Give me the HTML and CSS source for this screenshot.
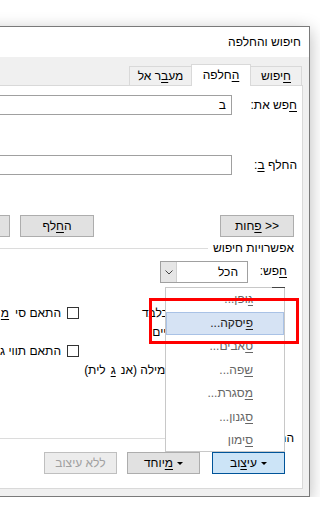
FILE: index.html
```html
<!DOCTYPE html>
<html lang="he">
<head>
  <meta charset="UTF-8">
  <title>חיפוש והחלפה</title>
  <link rel="stylesheet" href="styles.css">
</head>
<body>
  <div class="dialog">
    <div class="titlebar">חיפוש והחלפה</div>
    <div class="frame">
      <div class="tabs">
        <div class="tab" style="width:52px"><u>ח</u>יפוש</div>
        <div class="tab selected" style="width:60px"><u>ה</u>חלפה</div>
        <div class="tab" style="width:63px">מע<u>ב</u>ר אל</div>
      </div>
      <div class="panel">
        <div class="field find">
          <div class="label"><u>ח</u>פש את:</div>
          <div class="input">ב</div>
        </div>
        <div class="field replace">
          <div class="label">החלף <u>ב</u>:</div>
          <div class="input"></div>
        </div>

        <div class="actions">
          <div class="btn">&lt;&lt; <u>פ</u>חות</div>
          <div class="btn wide-gap">ה<u>ח</u>לף</div>
          <div class="btn small-gap">החלף ה<u>כ</u>ל</div>
        </div>

        <div class="group-head">
          <span>אפשרויות חיפוש</span>
          <div class="rule"></div>
        </div>

        <div class="search-row">
          <div class="label"><u>ח</u>פש:</div>
          <div class="combo">
            <span class="combo-text">הכל</span>
            <span class="combo-btn">
              <svg width="8" height="5" viewBox="0 0 8 5"><path d="M0.5 0.5 L4 4 L7.5 0.5" fill="none" stroke="#444" stroke-width="1"/></svg>
            </span>
          </div>
        </div>

        <div class="options">
          <div class="col-right">
            <div class="opt"><span class="check"></span>התאם רישיות</div>
            <div class="opt"><span class="check"></span>חפש מילים שלמות בלבד</div>
            <div class="opt"><span class="check"></span>השתמש בתווים כלליים</div>
            <div class="opt"><span class="check"></span>נשמע כמו (אנגלית)</div>
            <div class="opt"><span class="check"></span>חפש את כל צורות המילה (אנ<u>ג</u>לית)</div>
          </div>
          <div class="col-left">
            <div class="opt"><span class="check"></span>התאם סי<u>מ</u>ני ניקוד</div>
            <div class="opt second"><span class="check"></span>התאם תווי גרש</div>
          </div>
        </div>

        <div class="group-head replace-head">
          <span>החלפה</span>
          <div class="rule"></div>
        </div>

        <div class="bottom-buttons">
          <div class="btn pressed"><span class="arrow"></span>עי<u>צ</u>וב</div>
          <div class="btn gap-12"><span class="arrow"></span><u>מ</u>יוחד</div>
          <div class="btn disabled gap-10">ללא עיצוב</div>
        </div>

        <div class="menu">
          <div class="item"><u>ג</u>ופן...</div>
          <div class="item active"><u>פ</u>יסקה...</div>
          <div class="item"><u>ט</u>אבים...</div>
          <div class="item"><u>ש</u>פה...</div>
          <div class="item"><u>מ</u>סגרת...</div>
          <div class="item"><u>ס</u>גנון...</div>
          <div class="item"><u>ס</u>ימון</div>
        </div>
        <div class="callout"></div>
      </div>
    </div>
  </div>
</body>
</html>
```

FILE: styles.css
```css
* {
  box-sizing: border-box;
}

body {
  margin: 0;
  background: #fff;
  overflow: hidden;
  font-family: "Liberation Sans", "DejaVu Sans", sans-serif;
  font-size: 12px;
  color: #000;
}

u {
  text-decoration: underline;
  text-underline-offset: 2px;
}

.dialog {
  direction: rtl;
  width: 400px;
  margin: 26px 0 0 -90px;
  border: 1px solid #7a7a7a;
  background: #f0f0f0;
  box-shadow: 0 4px 16px rgba(0, 0, 0, 0.28);
}

.titlebar {
  height: 30px;
  line-height: 30px;
  padding-right: 8px;
  background: #fff;
  white-space: nowrap;
}

.frame {
  padding: 7px 6px 7px 0;
}

.tabs {
  display: flex;
  align-items: flex-end;
  height: 21px;
  margin-right: 1px;
}

.tab {
  height: 19px;
  line-height: 18px;
  text-align: center;
  border: 1px solid #d9d9d9;
  border-bottom: none;
  background: #f0f0f0;
  margin-right: -1px;
  white-space: nowrap;
}

.tab:first-child {
  margin-right: 0;
}

.tab.selected {
  position: relative;
  z-index: 2;
  height: 22px;
  line-height: 20px;
  margin-bottom: -1px;
  background: #fff;
}

.panel {
  position: relative;
  height: 404px;
  border: 1px solid #d9d9d9;
  background: #fff;
}

.field {
  display: flex;
  height: 20px;
}

.find {
  margin-top: 9px;
}

.replace {
  margin-top: 40px;
}

.field .label {
  width: 70px;
  padding-right: 5px;
  line-height: 20px;
  white-space: nowrap;
}

.input {
  flex: 1;
  height: 20px;
  line-height: 18px;
  padding-right: 5px;
  border: 1px solid #a0a0a0;
}

.actions {
  display: flex;
  margin-top: 40px;
  padding-right: 8px;
}

.btn {
  width: 74px;
  height: 22px;
  line-height: 20px;
  text-align: center;
  border: 1px solid #adadad;
  background: #e1e1e1;
  white-space: nowrap;
  flex-shrink: 0;
}

.wide-gap {
  margin-right: 126px;
}

.small-gap {
  margin-right: 10px;
}

.group-head {
  display: flex;
  align-items: center;
  height: 18px;
  margin-top: 2px;
  padding-right: 8px;
  white-space: nowrap;
}

.group-head .rule {
  flex: 1;
  height: 1px;
  margin-right: 5px;
  background: #dcdcdc;
}

.search-row {
  display: flex;
  margin-top: 4px;
  padding-right: 15px;
  height: 22px;
}

.search-row .label {
  width: 39px;
  line-height: 21px;
}

.combo {
  display: flex;
  width: 88px;
  height: 22px;
  border: 1px solid #a0a0a0;
}

.combo-text {
  flex: 1;
  line-height: 20px;
  padding-right: 9px;
}

.combo-btn {
  width: 16px;
  display: flex;
  align-items: center;
  justify-content: center;
  background: #e6e6e6;
  border-right: 1px solid #d0d0d0;
}

.options {
  display: flex;
  margin-top: 1px;
  height: 95px;
}

.col-right {
  width: 223px;
  padding-right: 19px;
}

.col-left {
  flex: 1;
  padding-top: 19px;
}

.opt {
  display: flex;
  align-items: center;
  gap: 5px;
  height: 19px;
  white-space: nowrap;
}

.col-left .opt {
  gap: 6px;
}

.col-left .second {
  margin-top: 19px;
}

.check {
  width: 12px;
  height: 12px;
  flex-shrink: 0;
  border: 1px solid #333;
  background: #fff;
}

.replace-head {
  margin-top: 50px;
}

.bottom-buttons {
  display: flex;
  margin-top: 5px;
  padding-right: 17px;
}

.bottom-buttons .btn {
  width: 73px;
}

.gap-12 {
  margin-right: 12px;
}

.gap-10 {
  margin-right: 10px;
}

.btn.pressed {
  background: #cce4f7;
  border-color: #005499;
}

.btn.disabled {
  color: #a0a0a0;
  background: #ececec;
  border-color: #bfbfbf;
}

.arrow {
  display: inline-block;
  vertical-align: middle;
  margin-left: 4px;
  border-left: 3px solid transparent;
  border-right: 3px solid transparent;
  border-top: 3px solid #000;
}

.menu {
  position: absolute;
  top: 201px;
  right: 17px;
  width: 120px;
  height: 165px;
  border: 1px solid #c8c8c8;
  background: #fff;
  z-index: 3;
}

.menu::before {
  content: "";
  position: absolute;
  top: -1px;
  right: -1px;
  width: 13px;
  height: 1px;
  background: #444;
}

.item {
  height: 23.5px;
  line-height: 23px;
  padding-right: 31px;
  color: #666;
  white-space: nowrap;
}

.item.active {
  color: #222;
  background: #d6e3f4;
  border: 1px solid #a9c2e6;
  padding-right: 30px;
  line-height: 21px;
}

.callout {
  position: absolute;
  top: 212px;
  right: 3px;
  width: 150px;
  height: 46px;
  border: 3px solid #ff0000;
  z-index: 4;
}
```
